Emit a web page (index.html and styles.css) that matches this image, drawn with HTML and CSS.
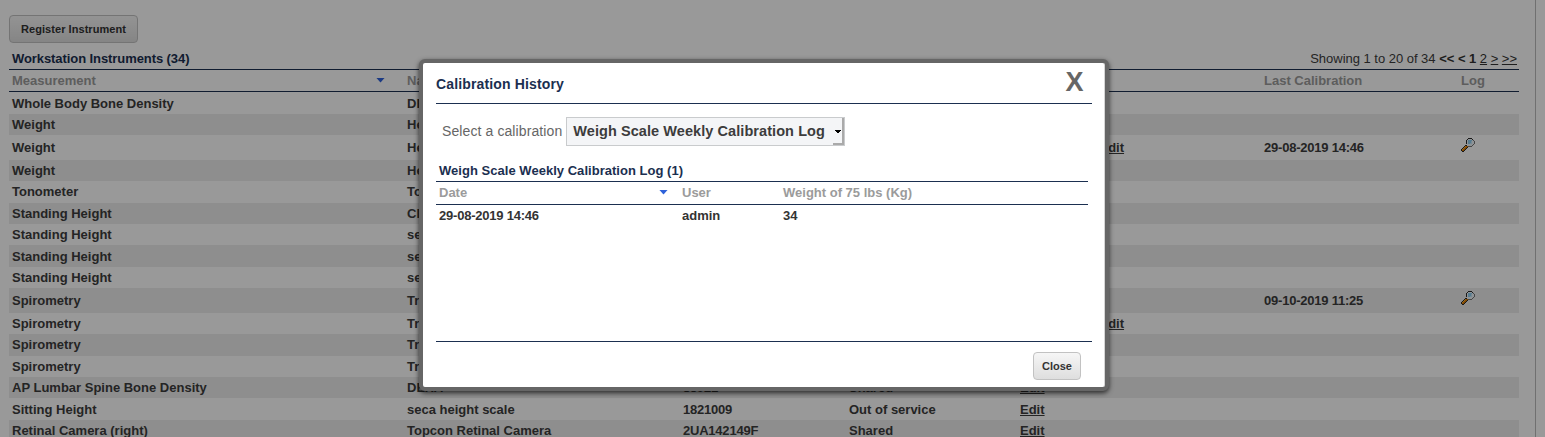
FILE: index.html
```
<!DOCTYPE html>
<html lang="en">
<head>
<meta charset="utf-8">
<title>Workstation Instruments</title>
<link rel="stylesheet" href="styles.css">
</head>
<body>
<svg class="defs" width="0" height="0">
  <symbol id="lens" viewBox="0 0 14 14" shape-rendering="crispEdges">
    <path fill="#2a2a2a" d="M7 0h4v1H7zM6 1h1v1H6zM11 1h1v1h-1zM5 2h1v4H5zM6 6h1v1H6zM4 7h2v1H4zM3 8h1v1H3zM2 9h1v1H2zM1 10h1v1H1zM0 11h1v2H0zM1 13h2v1H1zM3 12h1v1H3zM4 11h1v1H4zM5 10h1v1H5zM6 9h1v1H6z"/>
    <path fill="#777" d="M12 2h1v1h-1zM13 3h1v3h-1zM12 6h1v1h-1zM11 7h1v1h-1zM7 8h4v1H7z"/>
    <path fill="#eef6fa" d="M7 1h4v1H7zM6 2h6v5H6zM12 3h1v3h-1zM7 7h4v1H7z"/>
    <path fill="#8ecdf0" d="M7 2h4v1H7zM7 3h3v2H7zM7 5h2v1H7z"/>
    <path fill="#c5e5f5" d="M10 3h1v2h-1zM9 5h2v1H9z"/>
    <path fill="#d57900" d="M4 8h3v1H4zM3 9h3v1H3zM2 10h3v1H2zM1 11h3v1H1zM1 12h2v1H1z"/>
    <path fill="#ffad33" d="M4 8h1v1H4zM3 9h1v1H3zM2 10h1v1H2zM1 11h1v1H1z"/>
  </symbol>
</svg>
<main class="page">
  <button class="btn register">Register Instrument</button>
  <div class="caption">
    <h2>Workstation Instruments (34)</h2>
    <div class="pager">Showing 1 to 20 of 34 <b>&lt;&lt;</b> <b>&lt;</b> <b>1</b> <a>2</a> <a>&gt;</a> <a>&gt;&gt;</a></div>
  </div>
  <div class="row head"><span class="sorted">Measurement<i class="arrow"></i></span><span>Name</span><span></span><span></span><span></span><span>Last Calibration</span><span>Log</span></div>
  <div class="list">
    <div class="row roomy low"><span>Whole Body Bone Density</span><span>DE</span></div>
    <div class="row"><span>Weight</span><span>He</span></div>
    <div class="row tall"><span>Weight</span><span>He</span><span></span><span></span><span><a class="edit second">Edit</a></span><span class="num">29-08-2019 14:46</span><span><svg class="lens"><use href="#lens"/></svg></span></div>
    <div class="row"><span>Weight</span><span>He</span></div>
    <div class="row roomy"><span>Tonometer</span><span>To</span></div>
    <div class="row"><span>Standing Height</span><span>CD</span></div>
    <div class="row"><span>Standing Height</span><span>se</span></div>
    <div class="row roomy low"><span>Standing Height</span><span>se</span></div>
    <div class="row"><span>Standing Height</span><span>se</span></div>
    <div class="row tall"><span>Spirometry</span><span>Tr</span><span></span><span></span><span></span><span class="num">09-10-2019 11:25</span><span><svg class="lens"><use href="#lens"/></svg></span></div>
    <div class="row"><span>Spirometry</span><span>Tr</span><span></span><span></span><span><a class="edit second">Edit</a></span></div>
    <div class="row roomy"><span>Spirometry</span><span>Tr</span></div>
    <div class="row"><span>Spirometry</span><span>Tr</span></div>
    <div class="row"><span>AP Lumbar Spine Bone Density</span><span>DEXA</span><span class="num">85921</span><span>Shared</span><span><a class="edit">Edit</a></span></div>
    <div class="row roomy low"><span>Sitting Height</span><span>seca height scale</span><span class="num">1821009</span><span>Out of service</span><span><a class="edit">Edit</a></span></div>
    <div class="row"><span>Retinal Camera (right)</span><span>Topcon Retinal Camera</span><span class="num">2UA142149F</span><span>Shared</span><span><a class="edit">Edit</a></span></div>
  </div>
</main>
<div class="overlay">
  <section class="dialog">
    <header class="title"><h1>Calibration History</h1><span class="x">X</span></header>
    <div class="body">
      <div class="choose"><span>Select a calibration</span><div class="select"><span>Weigh Scale Weekly Calibration Log</span><i class="drop"></i></div></div>
      <div class="log">
        <h2>Weigh Scale Weekly Calibration Log (1)</h2>
        <div class="entry keys"><span class="sorted">Date<i class="arrow"></i></span><span>User</span><span>Weight of 75 lbs (Kg)</span></div>
        <div class="entry"><span class="num">29-08-2019 14:46</span><span>admin</span><span>34</span></div>
      </div>
    </div>
    <footer class="actions"><button class="btn close">Close</button></footer>
  </section>
</div>
</body>
</html>
```
FILE: styles.css
```
* { box-sizing: border-box; }
html, body { height: 100%; overflow: hidden; }
body { margin: 0; font: 13px/15px "Liberation Sans", Arial, sans-serif; color: #3c3c3c; background: #fff; }
h1, h2 { margin: 0; color: #1b2f50; }
h2 { font-size: 13px; line-height: 15px; }
.defs { position: absolute; }
.page { width: 1536px; height: 437px; padding: 15px 16px 0 9px; border-right: 1px solid #bbb; overflow: hidden; }
.btn { display: block; height: 28px; padding: 0; border: 1px solid #c2c2c2; border-radius: 4px; background: linear-gradient(#f6f6f6, #dedede); color: #333; font: bold 11px/13px "Liberation Sans", Arial, sans-serif; }
.register { width: 129px; letter-spacing: .05px; }
.caption { display: flex; justify-content: space-between; height: 27px; padding: 8px 2px 0 3px; border-bottom: 1px solid #1b2f50; }
.caption h2 { letter-spacing: -.08px; }
.pager { letter-spacing: -.02px; }
.pager b, .pager a { color: #333; }
.pager a, .edit { text-decoration: underline; }
.num { letter-spacing: -.22px; }
.row { display: grid; grid-template-columns: 395px 276px 166px 171px 244px 197px 1fr; align-items: center; height: 21px; padding-left: 3px; font-weight: bold; }
.list .row { align-items: start; padding-top: 3px; }
.list .roomy { height: 22px; }
.list .low { padding-top: 4px; }
.list .tall { height: 25px; padding-top: 5px; }
.list .row:nth-child(even) { background: #ededed; }
.second { margin-left: 79.5px; }
.head { height: 22px; border-bottom: 1px solid #1b2f50; color: #9b9b9b; }
.sorted { display: flex; align-items: center; justify-content: space-between; }
.arrow { width: 9px; height: 5px; margin: 0 22px 1px 0; background: #2f62da; clip-path: polygon(0 0, 100% 0, 50% 100%); }
.lens { display: block; width: 14px; height: 14px; margin-top: -2px; }
.overlay { position: absolute; inset: 0; background: rgba(0, 0, 0, .4); }
.dialog { position: absolute; left: 419px; top: 59px; width: 690px; height: 332px; padding: 0 13px; display: flex; flex-direction: column; border: 4px solid #666; border-radius: 6px; background: #fff; box-shadow: 0 2px 5px rgba(0, 0, 0, .7), inset -1px 0 #d5d5d5; }
.title { display: flex; justify-content: space-between; height: 41px; border-bottom: 1px solid #1b2f50; padding: 5px 8.5px 0 0; }
h1 { padding-top: 8px; font-size: 14px; line-height: 16px; letter-spacing: .14px; }
.x { font-size: 27px; line-height: 28px; font-weight: bold; color: #666; }
.body { height: 238px; border-bottom: 1px solid #1b2f50; padding-top: 13px; }
.choose { display: flex; align-items: center; gap: 4px; padding-left: 6px; font-size: 14px; letter-spacing: .1px; color: #666; }
.select { display: flex; align-items: center; justify-content: space-between; width: 279px; height: 29px; padding-left: 6px; border: 1px solid #c9cbcd; background: #f4f5f7; color: #3c3c3c; font-weight: bold; font-size: 14.5px; letter-spacing: .07px; white-space: nowrap; }
.drop { align-self: stretch; width: 11px; border: solid #aaa; border-width: 0 2px 2px 0; background: linear-gradient(#000, #000) 2px 12px / 6px 1px no-repeat, linear-gradient(#000, #000) 3px 13px / 4px 1px no-repeat, linear-gradient(#000, #000) 4px 14px / 2px 1px no-repeat; }
.log { width: 652px; padding-top: 17px; }
.log h2 { height: 19px; padding-left: 3px; border-bottom: 1px solid #1b2f50; letter-spacing: .03px; }
.entry { display: grid; grid-template-columns: 243px 101px 1fr; align-items: start; height: 22px; padding: 3px 0 0 3px; font-weight: bold; color: #333; }
.keys { height: 23px; border-bottom: 1px solid #1b2f50; color: #9b9b9b; }
.keys .arrow { margin-right: 14px; }
.actions { display: flex; justify-content: flex-end; padding: 10px 11px 0 0; }
.close { width: 48px; }
```
